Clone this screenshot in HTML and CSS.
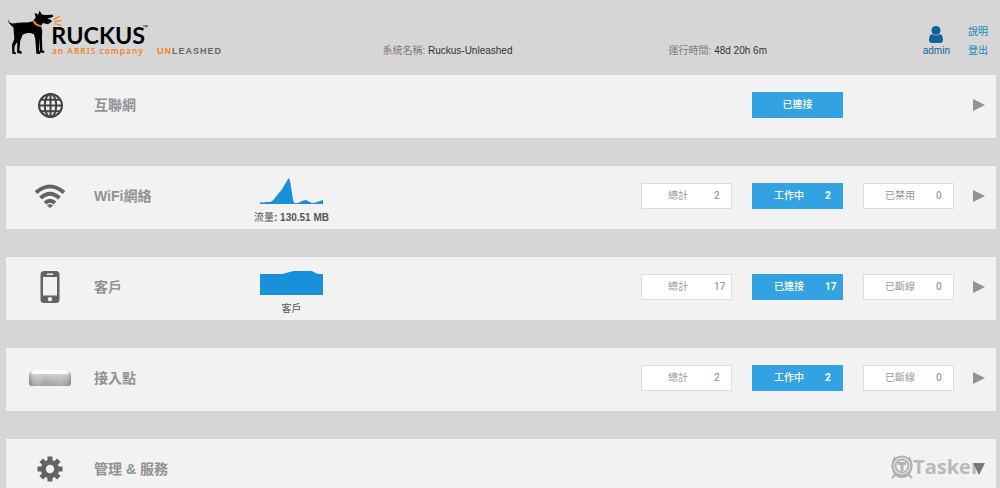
FILE: index.html
```html
<!DOCTYPE html>
<html lang="zh-Hant">
<head>
    <meta charset="UTF-8">
    <meta name="viewport" content="width=device-width, initial-scale=1.0">
    <title>Ruckus Unleashed</title>
    <link rel="stylesheet" href="styles.css">
</head>
<body>
    <header class="header">
        <div class="brand">
            <svg class="logo" viewBox="24 30 420 138" role="img" aria-label="Ruckus">
                <!-- dog -->
                <path d="M23 56 C27 68 34 72 46 70 C64 66 84 70 98 64 L107 53 L104 39 L111 41 L114 45 L119 32 L125 43 L133 45 L158 44 L160 50 L142 56 L154 60 L155 65 L144 73 L128 69 L123 80 C130 92 125 102 126 113 L127 151 L134 154 L131 159 L120 157 L118 113 L117 151 L122 158 L119 162 L109 161 L106 119 L102 103 C88 97 79 99 68 104 L61 122 L58 151 L66 156 L64 161 L51 159 L52 126 L44 138 L43 155 L49 159 L46 163 L37 161 L36 134 L43 116 L40 82 C34 77 25 71 23 56 Z"/>
                <path class="logo-line collar" d="M100 62 Q108 77 123 78"/>
                <path class="logo-line" d="M161 58 L179 49 M163 65 L185 61 M163 71 L184 76"/>
                <text class="logo-name" x="154" y="132">RUCKUS</text>
                <text class="logo-tm" x="426" y="86">™</text>
                <text class="logo-sub" x="156" y="161">an ARRIS company</text>
            </svg>
            <span class="product"><span class="accent">UN</span>LEASHED</span>
        </div>
        <div class="info info-name"><span class="info-label">系統名稱:</span> Ruckus-Unleashed</div>
        <div class="info"><span class="info-label">運行時間:</span> 48d 20h 6m</div>
        <div class="account">
            <a class="user" href="#">
                <svg class="user-icon" viewBox="0 0 14 17" aria-hidden="true">
                    <circle cx="7" cy="4.5" r="4.5"/>
                    <path d="M3 8 Q7 11 11 8 Q14 9 14 14 Q14 17 11 17 H3 Q0 17 0 14 Q0 9 3 8 Z"/>
                </svg>
                admin
            </a>
            <nav class="links">
                <a href="#">說明</a>
                <a href="#">登出</a>
            </nav>
        </div>
    </header>

    <main class="panels">
        <section class="panel">
            <svg class="icon icon-globe" viewBox="0 0 24 24" aria-hidden="true">
                <circle cx="12" cy="12" r="11"/>
                <ellipse cx="12" cy="12" rx="5.5" ry="11"/>
                <path d="M12 1 V23 M1 12 H23 M3 6.5 H21 M3 17.5 H21"/>
            </svg>
            <h2>互聯網</h2>
            <div class="chart"></div>
            <div class="stats">
                <button class="stat active single">已連接</button>
            </div>
            <button class="toggle" aria-label="展開"><svg viewBox="0 0 12 14"><path d="M0 1 L12 7 L0 13 Z"/></svg></button>
        </section>

        <section class="panel">
            <svg class="icon icon-wifi" viewBox="0 0 32 24" aria-hidden="true">
                <path d="M2 8.5 Q16 -3.5 30 8.5"/>
                <path d="M6.5 14 Q16 5.5 25.5 14"/>
                <path d="M11 19 Q16 14.5 21 19"/>
                <path class="dot" d="M13 21.5 Q16 19 19 21.5 L16 24 Z"/>
            </svg>
            <h2>WiFi網絡</h2>
            <div class="chart">
                <svg viewBox="0 0 63 28" aria-hidden="true">
                    <path d="M0 28 V26 Q2 27 6 26 H10 C14 25 15 21 19 17 C24 12 26 5 29 2 C31 6 32 21 34 27 C39 28 42 24 46 24 C49 25 50 27 54 27 L63 24 V28 Z"/>
                </svg>
                <span class="caption">流量<b>: 130.51 MB</b></span>
            </div>
            <div class="stats">
                <button class="stat"><span>總計</span><b>2</b></button>
                <button class="stat active"><span>工作中</span><b>2</b></button>
                <button class="stat"><span>已禁用</span><b>0</b></button>
            </div>
            <button class="toggle" aria-label="展開"><svg viewBox="0 0 12 14"><path d="M0 1 L12 7 L0 13 Z"/></svg></button>
        </section>

        <section class="panel">
            <svg class="icon icon-phone" viewBox="0 0 20 32" aria-hidden="true">
                <path fill-rule="evenodd" d="M4 0 H16 Q19.5 0 19.5 3.5 V28.5 Q19.5 32 16 32 H4 Q0.5 32 0.5 28.5 V3.5 Q0.5 0 4 0 Z M3 6 V24.5 H17 V6 Z M7 2.6 V4 H13 V2.6 Z M10 26 A2.2 2.2 0 1 0 10.01 26 Z"/>
            </svg>
            <h2>客戶</h2>
            <div class="chart">
                <svg viewBox="0 0 63 28" aria-hidden="true">
                    <path d="M0 28 V7 H22 C28 6 30 4 36 4 H51 C54 4 55 7 59 7 H63 V28 Z"/>
                </svg>
                <span class="caption">客戶</span>
            </div>
            <div class="stats">
                <button class="stat"><span>總計</span><b>17</b></button>
                <button class="stat active"><span>已連接</span><b>17</b></button>
                <button class="stat"><span>已斷線</span><b>0</b></button>
            </div>
            <button class="toggle" aria-label="展開"><svg viewBox="0 0 12 14"><path d="M0 1 L12 7 L0 13 Z"/></svg></button>
        </section>

        <section class="panel">
            <svg class="icon icon-ap" viewBox="0 0 42 18" aria-hidden="true">
                <defs>
                    <linearGradient id="apFront">
                        <stop offset="0" stop-color="#777"/>
                        <stop offset="0.08" stop-color="#bbb"/>
                        <stop offset="0.2" stop-color="#d2d2d2"/>
                        <stop offset="0.4" stop-color="#bcbcbc"/>
                        <stop offset="0.75" stop-color="#cfcfcf"/>
                        <stop offset="0.93" stop-color="#b4b4b4"/>
                        <stop offset="1" stop-color="#777"/>
                    </linearGradient>
                    <linearGradient id="apShade" x2="0" y2="1">
                        <stop offset="0" stop-color="#fff" stop-opacity="0.6"/>
                        <stop offset="1" stop-color="#777" stop-opacity="0.4"/>
                    </linearGradient>
                </defs>
                <path d="M4 1 H38 L42 5 V14 Q42 17 39 17 H3 Q0 17 0 14 V5 Z" fill="url(#apFront)"/>
                <path d="M4 1 H38 L42 5 V14 Q42 17 39 17 H3 Q0 17 0 14 V5 Z" fill="url(#apShade)"/>
                <path d="M4 1 H38 L40 5 H2 Z" fill="#fafafa"/>
            </svg>
            <h2>接入點</h2>
            <div class="chart"></div>
            <div class="stats">
                <button class="stat"><span>總計</span><b>2</b></button>
                <button class="stat active"><span>工作中</span><b>2</b></button>
                <button class="stat"><span>已斷線</span><b>0</b></button>
            </div>
            <button class="toggle" aria-label="展開"><svg viewBox="0 0 12 14"><path d="M0 1 L12 7 L0 13 Z"/></svg></button>
        </section>

        <section class="panel">
            <svg class="icon icon-gear" viewBox="0 0 26 26" aria-hidden="true">
                <circle class="gear-ring" cx="13" cy="13" r="6.7"/>
                <path class="gear-teeth" d="M13 0.5 V5 M13 21 V25.5 M0.5 13 H5 M21 13 H25.5 M4.2 4.2 L7.3 7.3 M18.7 18.7 L21.8 21.8 M4.2 21.8 L7.3 18.7 M18.7 7.3 L21.8 4.2"/>
            </svg>
            <h2>管理 &amp; 服務</h2>
            <div class="chart"></div>
            <div class="stats"></div>
            <button class="toggle open" aria-label="收起"><svg viewBox="0 0 12 14"><path d="M0 1 H12 L6 13 Z"/></svg></button>
            <div class="watermark">
                <svg viewBox="0 0 22 24" aria-hidden="true">
                    <circle cx="11" cy="11" r="9.5"/>
                    <circle cx="11" cy="11" r="6.5"/>
                    <path d="M4 2 Q-1 11 4 19 M18 2 Q23 11 18 19 M5 19 L1 23 M17 19 L21 23 M5 20 Q11 24 17 20"/>
                    <path class="mark" d="M7 8.5 H15 M11 8.5 V16"/>
                </svg>
                Tasker
            </div>
        </section>
    </main>
</body>
</html>
```
FILE: styles.css
```css
:root {
    --page-color: #d6d6d6;
    --panel-color: #f2f2f2;
    --active-color: #32a2e2;
    --chart-color: #1a90da;
    --icon-color: #636363;
    --title-color: #919191;
}

* {
    margin: 0;
    padding: 0;
    box-sizing: border-box;
}

body {
    font-family: "Liberation Sans", "Noto Sans CJK TC", sans-serif;
    font-size: 10px;
    line-height: 16px;
    background-color: var(--page-color);
    color: #333;
}

a {
    color: #1787bd;
    text-decoration: none;
}

button {
    font: inherit;
    cursor: pointer;
}

/* header */
.header {
    display: flex;
    align-items: flex-end;
    gap: 2px;
    min-height: 75px;
    padding: 10px 12px 16px 8px;
}

.brand {
    display: flex;
    align-items: flex-end;
    align-self: stretch;
    gap: 9px;
    flex: 0 0 38%;
}

.logo {
    align-self: flex-start;
    width: 140px;
    height: 46px;
    overflow: visible;
}

.logo-line {
    fill: none;
    stroke: #f5822a;
    stroke-width: 4;
}

.collar {
    stroke-width: 6;
}

.logo-name {
    font-family: Lato, sans-serif;
    font-size: 70px;
    font-weight: 700;
}

.logo-tm {
    font-size: 18px;
}

.logo-sub {
    font-family: "Noto Sans", sans-serif;
    font-size: 25px;
    font-weight: 600;
    letter-spacing: 3px;
    fill: #f5822a;
}

.product {
    font-size: 9px;
    font-weight: 700;
    letter-spacing: 1px;
    color: #666;
}

.accent {
    color: #f5822a;
}

.info {
    white-space: nowrap;
}

.info-name {
    flex: 0 0 29%;
}

.info-label {
    color: #84777a;
}

.account {
    display: flex;
    align-items: flex-end;
    gap: 18px;
    margin-left: auto;
}

.user {
    display: flex;
    flex-direction: column;
    align-items: center;
    color: #0f6497;
}

.user-icon {
    width: 14px;
    height: 17px;
    fill: #0f6497;
}

.links {
    display: flex;
    flex-direction: column;
    gap: 3px;
}

/* panels */
.panels {
    display: flex;
    flex-direction: column;
    gap: 28px;
    padding: 0 4px 28px 6px;
}

.panel {
    position: relative;
    display: grid;
    grid-template-columns: 88px 140px 115px 1fr 42px;
    align-items: center;
    min-height: 63px;
    padding-bottom: 3px;
    background-color: var(--panel-color);
}

.panel h2 {
    font-size: 14px;
    line-height: 20px;
    color: var(--title-color);
}

.icon {
    justify-self: center;
    fill: var(--icon-color);
}

.icon-globe {
    width: 25px;
    height: 25px;
    fill: none;
    stroke: #444;
    stroke-width: 2;
}

.icon-wifi {
    width: 32px;
    height: 24px;
    fill: none;
    stroke: var(--icon-color);
    stroke-width: 4;
}

.icon-wifi .dot {
    fill: var(--icon-color);
    stroke: none;
}

.icon-phone {
    width: 20px;
    height: 32px;
}

.icon-ap {
    width: 42px;
    height: 18px;
}

.icon-gear {
    width: 26px;
    height: 26px;
    fill: none;
    stroke: var(--icon-color);
    stroke-width: 5;
}

/* traffic and client charts */
.chart {
    display: flex;
    flex-direction: column;
    align-items: center;
    align-self: end;
    gap: 6px;
    color: #555;
}

.chart svg {
    width: 63px;
    height: 28px;
    fill: var(--chart-color);
}

.caption {
    white-space: nowrap;
}

/* counters */
.stats {
    display: flex;
    justify-content: flex-end;
    gap: 20px;
}

.stat {
    display: flex;
    align-items: center;
    width: 91px;
    height: 26px;
    border: 1px solid #ddd;
    background-color: #fff;
    color: #999;
}

.stat span {
    flex: 0 0 72px;
}

.stat b {
    font-family: Roboto, sans-serif;
    font-weight: 500;
}

.active {
    border-color: var(--active-color);
    background-color: var(--active-color);
    color: #fff;
    font-weight: 500;
}

.active b {
    font-weight: 700;
}

.single {
    justify-content: center;
    margin-right: 111px;
}

.toggle {
    display: flex;
    justify-self: center;
    margin-left: 8px;
    border: none;
    background: none;
}

.toggle svg {
    width: 12px;
    height: 14px;
    fill: #929292;
}

.toggle.open {
    z-index: 1;
}

.toggle.open svg {
    fill: #777;
}

/* mark over the last panel */
.watermark {
    position: absolute;
    top: 16px;
    right: 16px;
    display: flex;
    align-items: center;
    font-family: "Open Sans", sans-serif;
    font-size: 20px;
    font-weight: 700;
    line-height: 24px;
    color: #b9b9b9;
}

.watermark svg {
    width: 22px;
    height: 24px;
    fill: none;
    stroke: #b0b0b0;
    stroke-width: 2;
}

.watermark .mark {
    stroke-width: 3;
}
```
